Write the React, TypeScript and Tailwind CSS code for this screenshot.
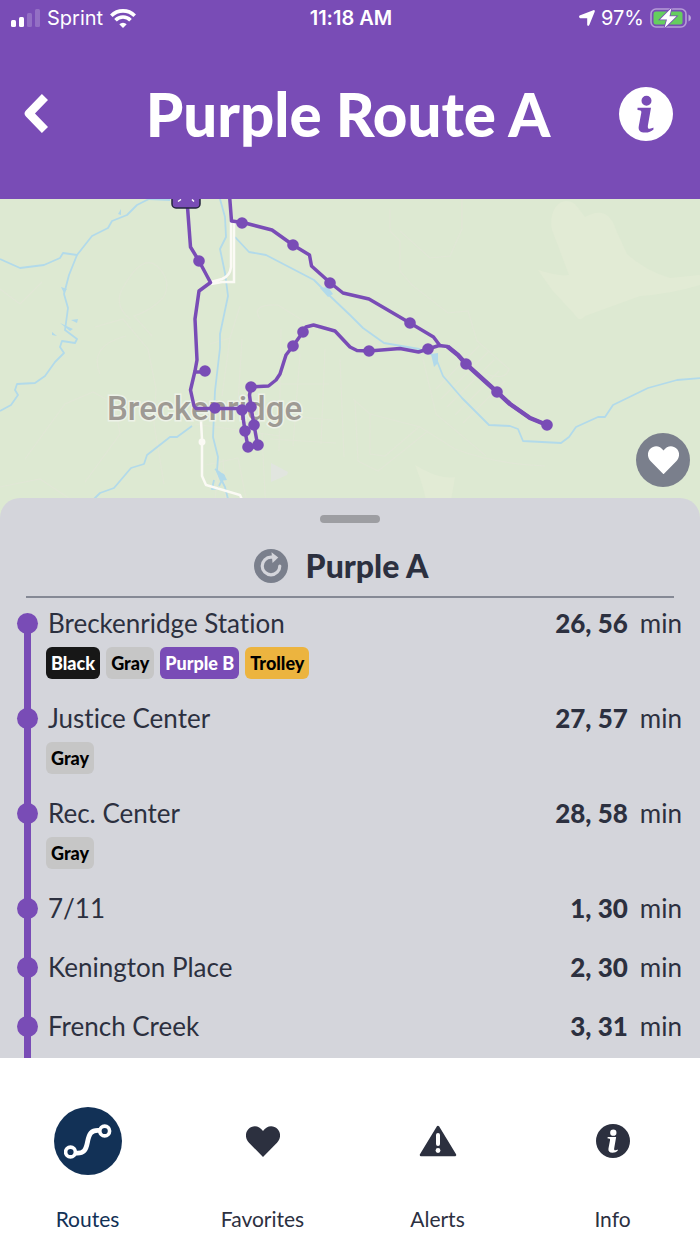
const stops = [
  { name: "Breckenridge Station", times: "26, 56", tags: ["Black", "Gray", "Purple B", "Trolley"] },
  { name: "Justice Center", times: "27, 57", tags: ["Gray"] },
  { name: "Rec. Center", times: "28, 58", tags: ["Gray"] },
  { name: "7/11", times: "1, 30", tags: [] },
  { name: "Kenington Place", times: "2, 30", tags: [] },
  { name: "French Creek", times: "3, 31", tags: [] },
];

const tagStyles: Record<string, string> = {
  Black: "bg-[#171717] text-white",
  Gray: "bg-[#c6c6c6] text-black",
  "Purple B": "bg-[#794cb6] text-white",
  Trolley: "bg-[#ecb43f] text-black",
};

// Stop markers on the map, in map coordinates
const mapStops = [
  [199, 62], [205, 172], [215, 209], [242, 211], [251, 188], [251, 208], [254, 226],
  [245, 232], [248, 248], [258, 246], [293, 147], [303, 133], [369, 152], [428, 150],
  [242, 24], [293, 46], [330, 84], [410, 124], [466, 165], [497, 193], [547, 226],
];

function InfoIcon({ className }: { className?: string }) {
  return (
    <svg viewBox="0 0 54 54" className={className} aria-hidden="true">
      <path
        fill="currentColor"
        fillRule="evenodd"
        d="M27 0a27 27 0 1 0 0 54a27 27 0 0 0 0-54zM27.500 8.700a5 5 0 1 1 0 10a5 5 0 0 1 0-10zM18.500 20.700H32L28.900 38.500C28.500 41 29.200 42 30.800 41.800C32.100 41.600 33 41 34.400 40.500L34.500 42.500C32.500 44.600 29.600 45.600 26.200 45.600C21.200 45.600 19 43.400 19.800 39L22.300 25.800C22.600 24 22 23.400 20.400 23.200L18.500 23z"
      />
    </svg>
  );
}

function HeartIcon({ className }: { className?: string }) {
  return (
    <svg viewBox="0 0 34 31" className={className} aria-hidden="true">
      <path
        fill="currentColor"
        d="M17 31L3 16.800C-1 12.500-1 6.500 2.500 3C6.500-1 13-.9 17 5C21-.9 27.500-1 31.500 3C35 6.500 35 12.500 31 16.800z"
      />
    </svg>
  );
}

function RoutesIcon() {
  return (
    <span className="flex size-[68px] items-center justify-center rounded-full bg-[#123156]">
      <svg viewBox="0 0 48 36" className="w-12" fill="none" stroke="white" strokeWidth="3.600" aria-hidden="true">
        <circle cx="6.500" cy="29" r="4.900" />
        <circle cx="40.700" cy="8" r="4.900" />
        <path d="M11 30C20 31 22 27 23.500 19S27 6.500 36 7.500" strokeWidth="4.800" />
      </svg>
    </span>
  );
}

function AlertIcon() {
  return (
    <svg viewBox="0 0 38 32" className="w-[38px]" aria-hidden="true">
      <path d="M19 2L36 30H2z" fill="currentColor" stroke="currentColor" strokeWidth="2.500" strokeLinejoin="round" />
      <path d="M19 10V19" stroke="white" strokeWidth="4" strokeLinecap="round" />
      <circle cx="19" cy="25.500" r="2.400" fill="white" />
    </svg>
  );
}

const tabs = [
  { label: "Routes", icon: <RoutesIcon />, active: true },
  { label: "Favorites", icon: <HeartIcon className="w-[34px]" />, active: false },
  { label: "Alerts", icon: <AlertIcon />, active: false },
  { label: "Info", icon: <InfoIcon className="w-[34px]" />, active: false },
];

function StatusBar() {
  return (
    <div className="grid h-9 grid-cols-3 items-center pl-[11px] pr-[9px] font-['Inter',sans-serif] text-[20px]">
      <div className="flex items-center gap-[7px]">
        <svg viewBox="0 0 29 18" className="w-[29px]" fill="white" aria-hidden="true">
          <rect x="0" y="11" width="5" height="7" rx="1.500" />
          <rect x="8" y="8" width="5" height="10" rx="1.500" />
          <rect x="16" y="4" width="5" height="14" rx="1.500" opacity=".2" />
          <rect x="24" y="0" width="5" height="18" rx="1.500" opacity=".2" />
        </svg>
        <span>Sprint</span>
        <svg viewBox="0 0 26 19" className="w-[26px]" fill="none" stroke="white" strokeWidth="3.600" aria-hidden="true">
          <path d="M1.300 6.700a16.500 16.500 0 0 1 23.400 0" />
          <path d="M5.500 11.200a10.500 10.500 0 0 1 15 0" />
          <path d="M13 19L9.300 15.200a5.300 5.300 0 0 1 7.400 0z" fill="white" stroke="none" />
        </svg>
      </div>
      <span className="text-center font-semibold">11:18 AM</span>
      <div className="flex items-center justify-end gap-[6px]">
        <svg viewBox="0 0 16 16" className="w-4" fill="white" aria-hidden="true">
          <path d="M.6 5.600L14.300.2Q16-.3 15.800 1.500L10.300 15.100Q9.300 16.700 8.200 15V8.200H1.200Q-.8 7.200.6 5.600z" />
        </svg>
        <span>97%</span>
        <svg viewBox="0 0 41 20" className="w-[41px]" aria-hidden="true">
          <rect x="1" y="1" width="35" height="18" rx="5" fill="none" stroke="white" strokeOpacity=".45" strokeWidth="1.600" />
          <path d="M38.500 6.500q2.500 1 2.500 3.500t-2.500 3.500z" fill="white" fillOpacity=".5" />
          <rect x="3.500" y="3.500" width="29" height="13" rx="2.500" fill="#65ce5e" />
          <path d="M21.500 0L10 11.500h7L14.500 20L26.500 8.300h-7z" fill="white" stroke="#794cb6" strokeWidth="1.600" paintOrder="stroke" />
        </svg>
      </div>
    </div>
  );
}

function RouteMap() {
  return (
    <svg viewBox="0 0 700 320" className="block w-full bg-[#dde9d2]" role="img" aria-label="Route map of Breckenridge">
      {/* Terrain */}
      <path
        d="M552 31C548 12 560-5 575 5L585 18Q608 5 616 31L627 55Q646 72 670 79L700 76V86Q670 95 640 97L585 117Q580 124 575 116L552 91L538 71Q560 78 569 76L560 52z"
        fill="#e2ebd5"
      />
      <path d="M415 266q25 15 40 12q-5 30-8 42h-20q2-20-12-54z" fill="#e2ebd5" />

      {/* Minor roads */}
      <g fill="none" stroke="#e1e7d6" strokeWidth="1.200">
        <path d="M95 128l28-8 25 30 8 40-2 35 10 60M130 120q-18-15-6-33q18-32 33-20q16 15 6 32q-13 13-29 18l18 20M100 175q-12-28 26-38" />
        <path d="M0 90l20 15 22-22M25 260l40-55 28-12 22 12 5 30-35 48M0 288l40-8 30 20" />
        <path d="M210 145l20-6 10-32M230 139l-8 58M242 140l-5 80M195 225l85 12M206 266l32-7 8 40M215 300l5-40M227 320l-4-60M262 235l4 80M281 130l-2 122M300 155l-7 92M325 150l-4 95M340 160l4 98M278 185h51M265 215l68 6M270 240l66 4M260 120q-10-15 18-14l40 25" />
        <path d="M390 10v22l10 10v30l12 14 36 28 20-2 9 30 32 28q-3 12-23 5M400 32l30 27 20-2 12-27V0M423 160l13 55 50 42M436 190l43-43M441 200l47-47M447 208l47-47M455 216l44-44M463 224l42-42" />
        <path d="M353 200l17 15 50 13 35 22q40 15 90 17M355 202l3 60 20 10 50-40M370 215v40l15 2 35-30" />
      </g>

      {/* Rivers */}
      <g fill="none" stroke="#b2daea" strokeWidth="1.800" strokeLinejoin="round">
        <path d="M0 60l20 9 24-3 16-7 3-5 14 2 15-19 16-8 4-7 15-6 10-10 12-6 21 1" />
        <path d="M77 56l-8 20-5 19 4 14-3 22 12 9-2 4-13-2-2 6 4 6-9 9-10 14-10 7-18 1-2 6 3 5-7 10-11 6" />
        <path d="M220 0l5 18 1 20-6 12 5 24 3 23-8 38 0 14-5 43-2 46 5 20-1 14 8 16 5 20-3 12" />
        <path d="M192 227l-15 11h-7l-23 18-3 9-13 4-17 20-14 5-9 9" />
        <path d="M235 38l14 15 17 3 48 25 16 16 21 20 12 12 21 15 35 6 16 7 8 20 19 22 27 27 21 1 8 3 5 12 38 2 8-6 7-10 22-10h7l8-12 35-17 29-8 24-2" />
        <path d="M214 281l-2 9 7-1M215 270l9 7-5 10" />
      </g>
      <g fill="#b2daea">
        <path d="M431 155l7-1v10l-4 4zM320 89l8-1 5 7-5 3zM60 124l13 6-3 2zM71 121l7-1-1 4zM52 133l5 4-5-1zM118 15l3-5v6zM216 272l8 3 3 6-7 1zM61 88l6 2-3 4z" />
      </g>
      <path d="M271 264l17 9-1 3-16 7z" fill="#e1e5df" />

      {/* Highway */}
      <g fill="none" stroke="#fbfaf5" strokeWidth="2.500">
        <path d="M231 23v45q-1 9-9 12l-11 3M234 23v60h-12l-11 2M201 222l1 18v37l4 9 34 10 6 14" />
        <circle cx="202" cy="243" r="2.200" />
      </g>

      <text
        x="107"
        y="221"
        fontSize="33"
        fontWeight="500"
        fill="#9e9a94"
        stroke="#edf2e8"
        strokeWidth="3"
        paintOrder="stroke"
        className="font-['Roboto',sans-serif]"
      >
        Breckenridge
      </text>

      {/* Route */}
      <g fill="none" stroke="#794cb6" strokeWidth="3.500" strokeLinejoin="round">
        <path d="M187.500 8L190.500 48L199 62L210.500 83.500L199 92L195 120L197 161L195 172L190.500 191L194 207L196 209.500H241L251 208L249.500 196L251 188L268.500 187L276 181L280 175L286 156L293 147L303 133L306 128L313.500 126L335 132L350 148L357 151.500L369 152L400 149.500L418.500 153L428 150L439 146.500L447.500 147.500L458 156L466 165L497 193L510 205L530 219L547 226" />
        <path d="M229.500-4L231.500 22L243 23.500L272 31L293 46L309.500 56L311.500 67L330.500 84L343 94L369 100L410 124L433.500 138L439.500 146" />
        <path d="M194 173h8v-4M242 211l3 21 3 16h10l-4-22-3-18" />
        <path d="M447.500 147.500L458 156L466 165L497 193L510 205L530 219L547 226" strokeWidth="4.500" />
      </g>
      <g fill="#794cb6">
        {mapStops.map(([x, y]) => (
          <circle key={`${x}-${y}`} cx={x} cy={y} r="5.800" />
        ))}
      </g>
      <rect x="172" y="-16" width="28" height="25" rx="4" fill="#794cb6" stroke="#25253f" strokeWidth="1.500" />
      <path d="M178 2.500l3-2M192 .5l2 2" stroke="white" strokeWidth="1.500" />
    </svg>
  );
}

export default function App() {
  return (
    <div className="flex h-screen flex-col overflow-hidden bg-white font-['Lato',sans-serif] text-[#2c303f] [font-variant-ligatures:none]">
      <header className="shrink-0 bg-[#794cb6] pb-2 text-white">
        <StatusBar />
        <div className="flex h-[155px] items-center justify-between pl-[23px] pr-[27px]">
          <button type="button" aria-label="Back" className="flex w-[54px] items-center">
            <svg viewBox="0 0 25 39" className="w-[25px]" fill="none" aria-hidden="true">
              <path
                d="M19 6L6 19.500L19 33"
                stroke="currentColor"
                strokeWidth="8.500"
                strokeLinejoin="round"
                strokeLinecap="square"
              />
            </svg>
          </button>
          <h1 className="text-[60px] font-black leading-[60px]">Purple Route A</h1>
          <button type="button" aria-label="Route info">
            <InfoIcon className="w-[54px]" />
          </button>
        </div>
      </header>

      <div className="relative shrink-0">
        <RouteMap />
        <button
          type="button"
          aria-label="Add to favorites"
          className="absolute bottom-8 right-[10px] flex size-[54px] items-center justify-center rounded-full bg-[#7a7f8c] text-white"
        >
          <HeartIcon className="w-[31px]" />
        </button>
      </div>

      <main className="relative -mt-[21px] flex min-h-0 flex-1 flex-col overflow-hidden rounded-t-[20px] bg-[#d4d5db]">
        <div className="mx-auto mt-[17px] h-2 w-[60px] shrink-0 rounded-full bg-[#9d9ea2]" />
        <div className="mx-[26px] flex shrink-0 items-center justify-center gap-[18px] border-b-2 border-[#858995] pb-3 pr-[18px] pt-[25px]">
          <button type="button" aria-label="Refresh times">
            <svg viewBox="0 0 34 34" className="w-[34px]" fill="none" aria-hidden="true">
              <circle cx="17" cy="17" r="17" fill="#7a7f8c" />
              <path d="M25.800 17a8.800 8.800 0 1 1-8.800-8.800h2" stroke="#d4d5db" strokeWidth="3.200" strokeLinecap="round" />
              <path d="M17.500 3.200L24.300 8.500L18.500 14z" fill="#d4d5db" />
            </svg>
          </button>
          <h2 className="text-[32px] font-black leading-9">Purple A</h2>
        </div>

        <ul className="min-h-0 flex-1 overflow-hidden pl-[17px] pr-[18px] pt-[5px]">
          {stops.map((stop, i) => (
            <li key={stop.name} className="flex">
              <div className="flex w-[21px] shrink-0 flex-col items-center">
                <span className={i === 0 ? "h-3" : "h-3 w-[7px] bg-[#794cb6]"} />
                <span className="-my-[2px] size-[21px] rounded-full bg-[#794cb6]" />
                <span className="w-[7px] flex-1 bg-[#794cb6]" />
              </div>
              <div className="ml-2 flex-1 pb-[19px]">
                <div className="flex justify-between pl-[2px] text-[26px] leading-10">
                  <span>{stop.name}</span>
                  <span className="flex gap-3">
                    <b className="font-black">{stop.times}</b>
                    <span>min</span>
                  </span>
                </div>
                {stop.tags.length > 0 && (
                  <div className="mt-1 flex gap-[6px]">
                    {stop.tags.map((tag) => (
                      <span
                        key={tag}
                        className={`rounded-md px-[5px] text-[18px] font-black leading-8 ${tagStyles[tag]}`}
                      >
                        {tag}
                      </span>
                    ))}
                  </div>
                )}
              </div>
            </li>
          ))}
        </ul>
      </main>

      <nav className="grid shrink-0 grid-cols-4 pb-[13px] pt-[49px]">
        {tabs.map((tab) => (
          <a
            key={tab.label}
            href="#"
            className={`flex flex-col items-center text-[21px] ${tab.active ? "text-[#123156]" : ""}`}
          >
            <span className="flex h-[68px] items-center">{tab.icon}</span>
            <span className="mt-8 leading-6">{tab.label}</span>
          </a>
        ))}
      </nav>
    </div>
  );
}
